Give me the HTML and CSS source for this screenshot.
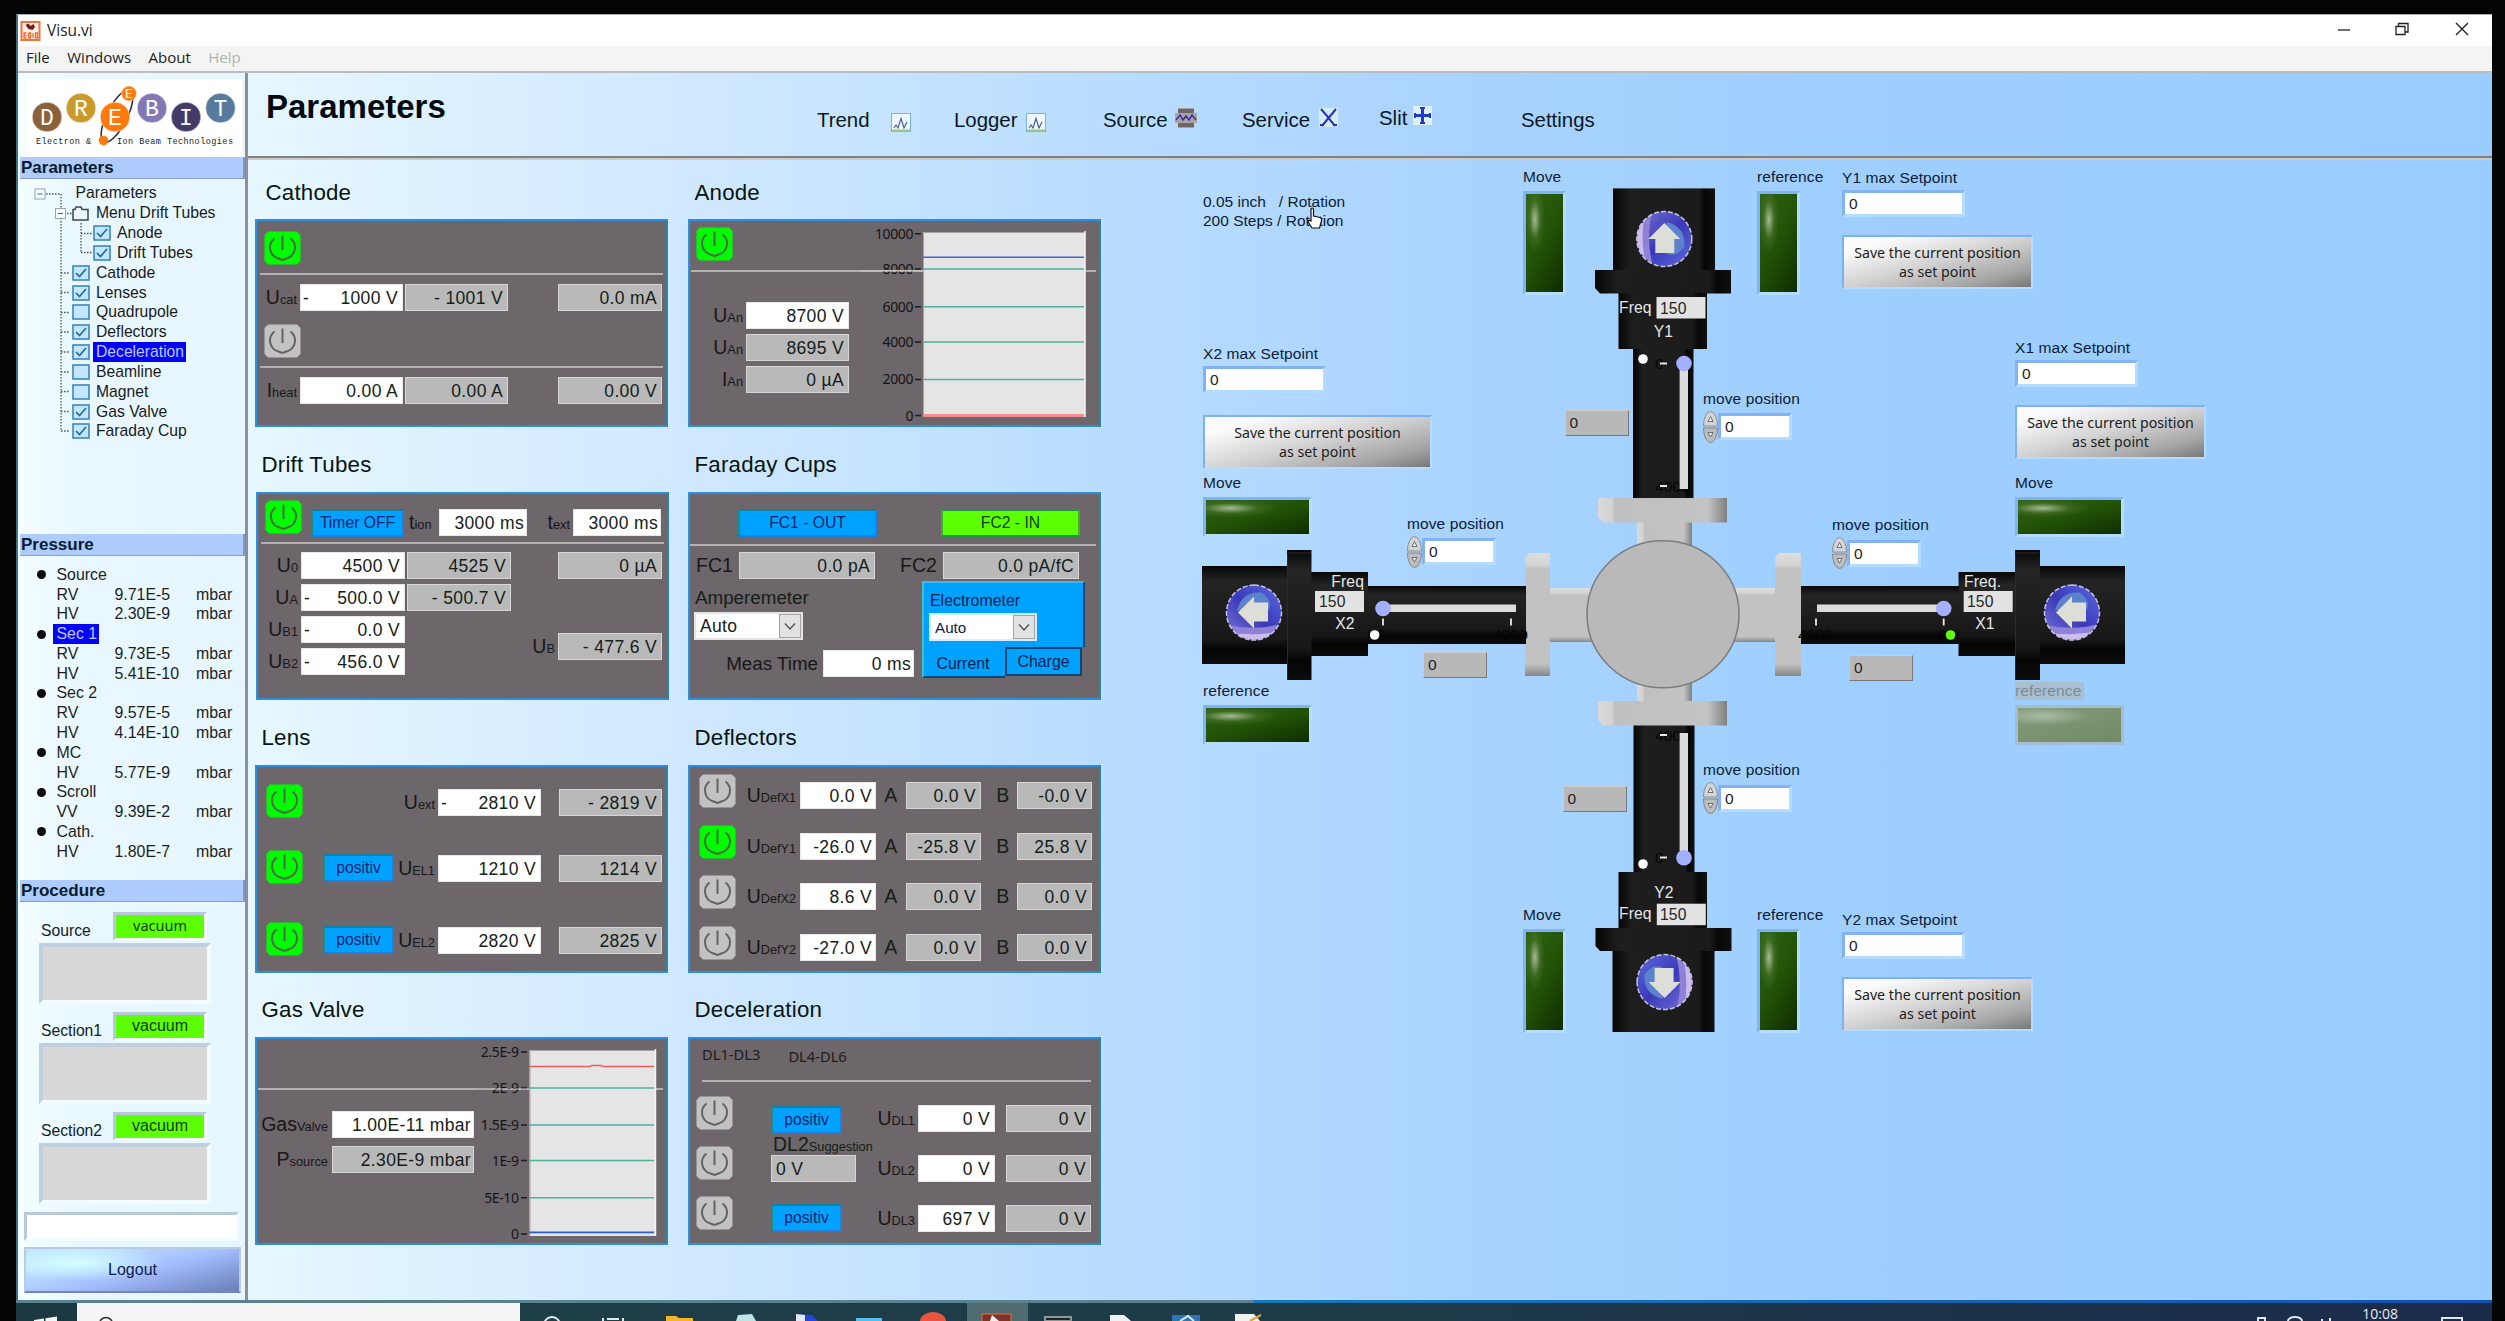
FILE: index.html
```html
<!DOCTYPE html>
<html lang="en">
<head>
<meta charset="utf-8">
<title>Visu.vi</title>
<link rel="stylesheet" href="styles.css">
</head>
<body>
<svg class="defs" width="0" height="0" aria-hidden="true">
  <defs>
    <symbol id="power" viewBox="0 0 37 34">
      <path d="M4 0.500H33L36.500 4V30L33 33.500H4L0.500 30V4Z" fill="currentColor"/>
      <path d="M10.500 7.500A12 11.500 0 0 0 14.500 27.500L18.500 29L22.500 27.500A12 11.500 0 0 0 26.500 7.500" fill="none" stroke="#4d6a45" stroke-width="2"/>
      <path d="M18.500 4.500V19" stroke="#4d6a45" stroke-width="2"/>
    </symbol>
    <symbol id="power-off" viewBox="0 0 37 34">
      <path d="M4 0.500H33L36.500 4V30L33 33.500H4L0.500 30V4Z" fill="#c2c2c2"/>
      <path d="M10.500 7.500A12 11.500 0 0 0 14.500 27.500L18.500 29L22.500 27.500A12 11.500 0 0 0 26.500 7.500" fill="none" stroke="#666163" stroke-width="2"/>
      <path d="M18.500 4.500V19" stroke="#666163" stroke-width="2"/>
    </symbol>
    <symbol id="check" viewBox="0 0 18 16">
      <rect x="1" y="1" width="16" height="14" fill="#c3e6ff" stroke="#3580b5" stroke-width="1.500"/>
      <path d="M4 8L7.500 11.500L14 4" fill="none" stroke="#1e6aa8" stroke-width="1.700"/>
    </symbol>
    <symbol id="uncheck" viewBox="0 0 18 16">
      <rect x="1" y="1" width="16" height="14" fill="#c3e6ff" stroke="#3580b5" stroke-width="1.500"/>
    </symbol>
    <symbol id="graph" viewBox="0 0 20 19">
      <rect x="0.500" y="0.500" width="19" height="18" fill="#eef8fc" stroke="#72b4ec"/>
      <path d="M1 17.500H19" stroke="#9cc97e" stroke-width="2"/>
      <path d="M3 15L5 12L7 15L10 5.500L13 15L16 9" fill="none" stroke="#4a5e92" stroke-width="1.200"/>
    </symbol>
    <symbol id="spin" viewBox="0 0 15 32">
      <path d="M0.500 15A7 14.500 0 0 1 14.500 15Z" fill="#d4d4d4" stroke="#8e8e8e"/>
      <path d="M0.500 17A7 14.500 0 0 0 14.500 17Z" fill="#bdbdbd" stroke="#858585"/>
      <path d="M5 10.500L7.500 5.500L10 10.500Z" fill="#eee" stroke="#555" stroke-width="0.800"/>
      <path d="M5 21.500L7.500 26L10 21.500Z" fill="#eee" stroke="#555" stroke-width="0.800"/>
    </symbol>
    <linearGradient id="ballg" x1="0" x2="1" y1="0" y2="1">
      <stop offset="0" stop-color="#7a74d8"/><stop offset="0.500" stop-color="#3a3ab8"/><stop offset="1" stop-color="#5c6ae0"/>
    </linearGradient>
    <clipPath id="ballclip"><circle r="27"/></clipPath>
    <g id="ball">
      <circle r="27.500" fill="url(#ballg)"/>
      <g clip-path="url(#ballclip)">
        <path d="M-28 -28H-12Q-19 0 -11 28H-28Z" fill="#8f80d8"/>
        <path d="M-28 -28H-19Q-25 0 -18 28H-28Z" fill="#cdbcee"/>
        <path d="M2 -17Q22 -12 20 8Q10 20 2 14Z" fill="#5d82cc"/>
      </g>
      <circle r="27.500" fill="none" stroke="#c4c4e2" stroke-width="1.500" stroke-dasharray="5 2"/>
      <path d="M0 -16L16 0H10V14H-9V0H-16Z" fill="#deded9"/>
    </g>
    <linearGradient id="bx" x1="0" x2="1"><stop offset="0" stop-color="#050505"/><stop offset="0.170" stop-color="#1e1e1e"/><stop offset="0.840" stop-color="#1b1b1b"/><stop offset="0.900" stop-color="#070707"/><stop offset="1" stop-color="#101010"/></linearGradient>
    <linearGradient id="by" x1="0" x2="0" y1="0" y2="1"><stop offset="0" stop-color="#060606"/><stop offset="0.150" stop-color="#242424"/><stop offset="0.750" stop-color="#181818"/><stop offset="0.850" stop-color="#050505"/><stop offset="1" stop-color="#0c0c0c"/></linearGradient>
    <linearGradient id="gx" x1="0" x2="1"><stop offset="0" stop-color="#d9d9d9"/><stop offset="0.110" stop-color="#d2d2d2"/><stop offset="0.130" stop-color="#c0c0c0"/><stop offset="0.850" stop-color="#c3c3c3"/><stop offset="1" stop-color="#7f7f7f"/></linearGradient>
    <linearGradient id="gy" x1="0" x2="0" y1="0" y2="1"><stop offset="0" stop-color="#dedede"/><stop offset="0.100" stop-color="#d2d2d2"/><stop offset="0.130" stop-color="#c2c2c2"/><stop offset="0.900" stop-color="#c2c2c2"/><stop offset="1" stop-color="#868686"/></linearGradient>
  </defs>
</svg>

<div class="screen">
  <div class="window">
    <header class="titlebar">
      <svg class="app-icon" viewBox="0 0 20 20"><rect x="1" y="1" width="18" height="18" fill="#fff0e4" stroke="#ee7440" stroke-width="2"/><path d="M5 4L8 2.500L10 5L13 3L14.500 6L12 9L8 8Z" fill="#7a1620"/><path d="M3 12H6M3 14.500H6M3 17H6M3.500 12V17M8 12V17M8 12H10V17H8M12.500 12V17M15 12H17V17H15Z" stroke="#ee6a30" stroke-width="1.300" fill="none"/></svg>
      <span>Visu.vi</span>
      <svg class="win-buttons" viewBox="0 0 140 20"><path d="M3 11H15" stroke="#222" stroke-width="1.300"/><path d="M61 7.500H70V15.500H61ZM63.500 7V4.500H73V13H70.500" fill="none" stroke="#222" stroke-width="1.300"/><path d="M121 4L133 16M133 4L121 16" stroke="#222" stroke-width="1.400"/></svg>
    </header>
    <nav class="menubar"><span>File</span><span>Windows</span><span>About</span><span class="off">Help</span></nav>

    <div class="body">
      <aside class="sidebar">
        <svg class="logo" viewBox="25 79 218 78">
          <ellipse cx="117" cy="116" rx="29" ry="10" fill="none" stroke="#26263a" stroke-width="1.500" transform="rotate(-63 117 116)"/>
          <g stroke="#fff" stroke-width="0.500">
            <circle cx="47" cy="117" r="14.800" fill="#8a6138"/><circle cx="81" cy="108" r="14.800" fill="#c9992c"/><circle cx="115" cy="117" r="14.800" fill="#ff7a0c"/><circle cx="152" cy="108" r="14.800" fill="#8378b4"/><circle cx="186" cy="117" r="14.800" fill="#443c66"/><circle cx="220.500" cy="108" r="14.800" fill="#587a9c"/><circle cx="129" cy="93.500" r="7.500" fill="#ff7a0c"/>
          </g>
          <circle cx="103.500" cy="140.500" r="4.800" fill="#ff7a0c"/>
          <g class="logo-letters" text-anchor="middle"><text x="47" y="124.500">D</text><text x="81" y="115.500">R</text><text x="115" y="124.500">E</text><text x="152" y="115.500">B</text><text x="186" y="124.500">I</text><text x="220.500" y="115.500">T</text></g>
          <text class="logo-e" x="129" y="98" text-anchor="middle">E</text>
          <text class="logo-sub" x="36" y="144" textLength="55">Electron &amp;</text>
          <text class="logo-sub" x="117" y="144" textLength="116">Ion Beam Technologies</text>
        </svg>
        <h2 class="side-title">Parameters</h2>
        <div class="tree">
          <svg class="tree-lines" viewBox="18 179 227 355"><g fill="none" stroke="#4a565c" stroke-width="1.300" stroke-dasharray="1.500 1.500"><path d="M46 194H61V431M81 223V252M61 213.500H72M81 233.500H92M81 252.500H92M61 273H70M61 292.500H70M61 312.500H70M61 332H70M61 352H70M61 372H70M61 391.500H70M61 411.500H70M61 431H70"/></g><g fill="#f4fbff" stroke="#9aa4aa"><rect x="35" y="189" width="10" height="10"/><rect x="55.500" y="208.500" width="10" height="10"/></g><path d="M37.500 194H42.500M58 213.500H63" stroke="#47608a"/></svg>
          <ul>
            <li class="l0">Parameters</li>
            <li class="l1"><svg class="box" viewBox="0 0 18 16"><path d="M1 4.500H3L4 2H9L10 4.500H16V15H1Z" fill="#eef8fc" stroke="#3c474d" stroke-width="1.500"/></svg>Menu Drift Tubes</li>
            <li class="l2"><svg class="box"><use href="#check"/></svg>Anode</li>
            <li class="l2"><svg class="box"><use href="#check"/></svg>Drift Tubes</li>
            <li class="l1"><svg class="box"><use href="#check"/></svg>Cathode</li>
            <li class="l1"><svg class="box"><use href="#check"/></svg>Lenses</li>
            <li class="l1"><svg class="box"><use href="#uncheck"/></svg>Quadrupole</li>
            <li class="l1"><svg class="box"><use href="#check"/></svg>Deflectors</li>
            <li class="l1"><svg class="box"><use href="#check"/></svg><span class="selected">Deceleration</span></li>
            <li class="l1"><svg class="box"><use href="#uncheck"/></svg>Beamline</li>
            <li class="l1"><svg class="box"><use href="#uncheck"/></svg>Magnet</li>
            <li class="l1"><svg class="box"><use href="#check"/></svg>Gas Valve</li>
            <li class="l1"><svg class="box"><use href="#check"/></svg>Faraday Cup</li>
          </ul>
        </div>
        <h2 class="side-title">Pressure</h2>
        <div class="pressure">
          <div class="head"><i></i><span>Source</span></div>
          <div><span>RV</span><span>9.71E-5</span><span>mbar</span></div>
          <div><span>HV</span><span>2.30E-9</span><span>mbar</span></div>
          <div class="head"><i></i><span class="selected">Sec 1</span></div>
          <div><span>RV</span><span>9.73E-5</span><span>mbar</span></div>
          <div><span>HV</span><span>5.41E-10</span><span>mbar</span></div>
          <div class="head"><i></i><span>Sec 2</span></div>
          <div><span>RV</span><span>9.57E-5</span><span>mbar</span></div>
          <div><span>HV</span><span>4.14E-10</span><span>mbar</span></div>
          <div class="head"><i></i><span>MC</span></div>
          <div><span>HV</span><span>5.77E-9</span><span>mbar</span></div>
          <div class="head"><i></i><span>Scroll</span></div>
          <div><span>VV</span><span>9.39E-2</span><span>mbar</span></div>
          <div class="head"><i></i><span>Cath.</span></div>
          <div><span>HV</span><span>1.80E-7</span><span>mbar</span></div>
        </div>
        <h2 class="side-title">Procedure</h2>
        <div class="procedure">
          <div class="proc"><div class="proc-top"><span>Source</span><b class="small">vacuum</b></div><div class="proc-box"></div></div>
          <div class="proc"><div class="proc-top"><span>Section1</span><b>vacuum</b></div><div class="proc-box"></div></div>
          <div class="proc"><div class="proc-top"><span>Section2</span><b>vacuum</b></div><div class="proc-box"></div></div>
          <div class="user-field"></div>
          <button class="logout">Logout</button>
        </div>
      </aside>

      <main class="main">
        <div class="topnav">
          <h1>Parameters</h1>
          <div class="tabs">
            <span class="tab t-trend">Trend <svg width="20" height="19"><use href="#graph"/></svg></span>
            <span class="tab t-logger">Logger <svg width="20" height="19"><use href="#graph"/></svg></span>
            <span class="tab t-source">Source <svg width="22" height="20" viewBox="0 0 22 20"><path d="M3 0H19V5H22V15H19V20H3V15H0V5H3Z" fill="#a9a4a0"/><path d="M3 1H19V5H3ZM3 15H19V19H3Z" fill="#6d6664"/><path d="M1 12L5 7L8 12L11 8L14 12L17 7L21 12" fill="none" stroke="#3a2aa8" stroke-width="1.500"/></svg></span>
            <span class="tab t-service">Service <svg width="19" height="19" viewBox="0 0 19 19"><rect width="19" height="19" fill="#d4ecf4"/><path d="M2 1L8 8L9.500 10L16 18M17 1L9.500 10L3 18M1 17H5M14 17H18" fill="none" stroke="#2530c4" stroke-width="2"/></svg></span>
            <span class="tab t-slit">Slit <svg width="19" height="19" viewBox="0 0 19 19"><rect width="19" height="19" fill="#def2f6"/><path d="M9.500 1V18M1 9.500H18" stroke="#1c3cc8" stroke-width="3"/><path d="M7 2H12M7 17H12M2 7V12M17 7V12" stroke="#1c3cc8" stroke-width="2"/></svg></span>
            <span class="tab t-settings">Settings</span>
          </div>
        </div>

        <div class="workspace">
          <div class="params">
            <section class="first"><h3 class="in4">Cathode</h3>
              <div class="panel cathode">
                <svg class="power"><use href="#power"/></svg>
                <div class="rule"></div>
                <div class="row"><span class="lab">U<small>cat</small></span><span class="set"><em>-</em>1000 V</span><span class="get">- 1001 V</span><span class="get end">0.0 mA</span></div>
                <svg class="power second"><use href="#power-off"/></svg>
                <div class="rule"></div>
                <div class="row"><span class="lab">I<small>heat</small></span><span class="set">0.00 A</span><span class="get">0.00 A</span><span class="get end">0.00 V</span></div>
              </div>
            </section>
            <section class="first"><h3>Anode</h3>
              <div class="panel anode">
                <div class="rule"></div>
                <div class="stack">
                  <svg class="power"><use href="#power"/></svg>
                  <div class="row"><span class="lab">U<small>An</small></span><span class="set">8700 V</span></div>
                  <div class="row"><span class="lab">U<small>An</small></span><span class="get">8695 V</span></div>
                  <div class="row"><span class="lab">I<small>An</small></span><span class="get">0 µA</span></div>
                </div>
                <svg class="chart" viewBox="860 221 239 204">
                  <rect x="923" y="232" width="162" height="185" fill="#e5e5e5"/><path d="M923.500 417V232.500H1085" fill="none" stroke="#a8a4a4"/><path d="M1085 231V417" stroke="#f4f4f4" stroke-width="1.500"/>
                  <path d="M923 269H1084M923 306.700H1084M923 342H1084M923 379.400H1084" stroke="#4fb3a4" stroke-width="1.500"/>
                  <path d="M923 257.300H1084" stroke="#3f66e0" stroke-width="1.500"/><path d="M923 415.500H1084" stroke="#f28d8d" stroke-width="3"/>
                  <path d="M915 233.700H921M915 269H921M915 306.700H921M915 342H921M915 379.400H921M915 415.500H921" stroke="#1d1d1d" stroke-width="1.500"/>
                  <g text-anchor="end"><text x="913" y="238.500">10000</text><text x="913" y="274">8000</text><text x="913" y="311.500">6000</text><text x="913" y="347">4000</text><text x="913" y="384">2000</text><text x="913" y="420.500">0</text></g>
                  <path d="M860 270.700H923" stroke="#c4c0c0" stroke-width="1.600"/>
                </svg>
              </div>
            </section>

            <section><h3>Drift Tubes</h3>
              <div class="panel drift">
                <div class="top">
                  <svg class="power"><use href="#power"/></svg><span class="btn timer">Timer OFF</span>
                  <span class="lab ion">t<small>ion</small></span><span class="set">3000 ms</span>
                  <span class="lab ext">t<small>ext</small></span><span class="set">3000 ms</span>
                </div>
                <div class="rule"></div>
                <div class="cols">
                  <div class="left">
                    <div class="row"><span class="lab">U<small>0</small></span><span class="set">4500 V</span><span class="get">4525 V</span></div>
                    <div class="row"><span class="lab">U<small>A</small></span><span class="set"><em>-</em>500.0 V</span><span class="get">- 500.7 V</span></div>
                    <div class="row"><span class="lab">U<small>B1</small></span><span class="set"><em>-</em>0.0 V</span></div>
                    <div class="row"><span class="lab">U<small>B2</small></span><span class="set"><em>-</em>456.0 V</span></div>
                  </div>
                  <div class="right">
                    <div class="row"><span class="get">0 µA</span></div>
                    <div class="row ub"><span class="lab">U<small>B</small></span><span class="get">- 477.6 V</span></div>
                  </div>
                </div>
              </div>
            </section>
            <section><h3>Faraday Cups</h3>
              <div class="panel faraday">
                <div class="top"><span class="btn">FC1 - OUT</span><span class="btn green">FC2 - IN</span></div>
                <div class="rule"></div>
                <div class="row"><span class="lab f1">FC1</span><span class="get">0.0 pA</span><span class="lab f2">FC2</span><span class="get">0.0 pA/fC</span></div>
                <div class="cols">
                  <div class="left">
                    <div class="amp">Amperemeter</div>
                    <div class="select"><span>Auto</span><svg viewBox="0 0 22 24"><rect x="0.500" y="0.500" width="21" height="23" fill="#e2e2e2" stroke="#a4a4a4"/><path d="M6 9.500L11 15L16 9.500" fill="none" stroke="#555" stroke-width="1.500"/></svg></div>
                    <div class="row meas"><span class="lab">Meas Time</span><span class="set">0 ms</span></div>
                  </div>
                  <div class="electro">
                    <div class="electro-body"><span>Electrometer</span>
                      <div class="select"><span>Auto</span><svg viewBox="0 0 22 24"><rect x="0.500" y="0.500" width="21" height="23" fill="#e2e2e2" stroke="#a4a4a4"/><path d="M6 9.500L11 15L16 9.500" fill="none" stroke="#555" stroke-width="1.500"/></svg></div></div>
                    <div class="electro-tabs"><span class="current">Current</span><span class="charge">Charge</span></div>
                  </div>
                </div>
              </div>
            </section>

            <section><h3>Lens</h3>
              <div class="panel lens">
                <div class="line"><svg class="power"><use href="#power"/></svg><span class="lab">U<small>ext</small></span><span class="set"><em>-</em>2810 V</span><span class="get end">- 2819 V</span></div>
                <div class="line"><svg class="power"><use href="#power"/></svg><span class="btn pos">positiv</span><span class="lab">U<small>EL1</small></span><span class="set">1210 V</span><span class="get end">1214 V</span></div>
                <div class="line"><svg class="power"><use href="#power"/></svg><span class="btn pos">positiv</span><span class="lab">U<small>EL2</small></span><span class="set">2820 V</span><span class="get end">2825 V</span></div>
              </div>
            </section>
            <section><h3>Deflectors</h3>
              <div class="panel defl">
                <div class="line"><svg class="power"><use href="#power-off"/></svg><span class="lab">U<small>DefX1</small></span><span class="set">0.0 V</span><span class="a">A</span><span class="get">0.0 V</span><span class="b">B</span><span class="get">-0.0 V</span></div>
                <div class="line"><svg class="power"><use href="#power"/></svg><span class="lab">U<small>DefY1</small></span><span class="set">-26.0 V</span><span class="a">A</span><span class="get">-25.8 V</span><span class="b">B</span><span class="get">25.8 V</span></div>
                <div class="line"><svg class="power"><use href="#power-off"/></svg><span class="lab">U<small>DefX2</small></span><span class="set">8.6 V</span><span class="a">A</span><span class="get">0.0 V</span><span class="b">B</span><span class="get">0.0 V</span></div>
                <div class="line"><svg class="power"><use href="#power-off"/></svg><span class="lab">U<small>DefY2</small></span><span class="set">-27.0 V</span><span class="a">A</span><span class="get">0.0 V</span><span class="b">B</span><span class="get">0.0 V</span></div>
              </div>
            </section>

            <section class="last"><h3>Gas Valve</h3>
              <div class="panel gas">
                <div class="rule"></div>
                <div class="stack">
                  <div class="row"><span class="lab">Gas<small>Valve</small></span><span class="set">1.00E-11 mbar</span></div>
                  <div class="row"><span class="lab">P<small>source</small></span><span class="get">2.30E-9 mbar</span></div>
                </div>
                <svg class="chart" viewBox="476 1038 190 204">
                  <rect x="529.500" y="1049" width="126" height="186" fill="#e5e5e5"/><path d="M530 1235V1049.500H655" fill="none" stroke="#a8a4a4"/><path d="M655.500 1048V1235" stroke="#f4f4f4" stroke-width="1.500"/>
                  <path d="M529 1087H654M529 1124H654M529 1159.600H654M529 1196.800H654" stroke="#4fb3a4" stroke-width="1.500"/>
                  <path d="M529 1065.400H590L592 1064.400H601L603 1065.400H654" fill="none" stroke="#f05c5c" stroke-width="1.500"/><path d="M529 1231.400H654" stroke="#2a5ed0" stroke-width="1.800"/>
                  <path d="M521 1051H527M521 1087H527M521 1124H527M521 1159.600H527M521 1196.800H527M521 1233H527" stroke="#1d1d1d" stroke-width="1.500"/>
                  <g text-anchor="end"><text x="518.500" y="1056">2.5E-9</text><text x="518.500" y="1092">2E-9</text><text x="518.500" y="1129">1.5E-9</text><text x="518.500" y="1164.500">1E-9</text><text x="518.500" y="1201.500">5E-10</text><text x="518.500" y="1238">0</text></g>
                  <path d="M476 1088H529" stroke="#aaa6a6" stroke-width="1.400" opacity="0.700"/>
                </svg>
              </div>
            </section>
            <section class="last"><h3>Deceleration</h3>
              <div class="panel decel">
                <div class="heads"><span>DL1-DL3</span><span class="dl4">DL4-DL6</span></div>
                <div class="rule"></div>
                <div class="cols">
                  <div class="pw"><svg class="power"><use href="#power-off"/></svg><svg class="power"><use href="#power-off"/></svg><svg class="power"><use href="#power-off"/></svg></div>
                  <div class="mid"><span class="btn pos">positiv</span><span class="sug">DL2<small>Suggestion</small></span><span class="get">0 V</span><span class="btn pos low">positiv</span></div>
                  <div class="rows">
                    <div class="row"><span class="lab">U<small>DL1</small></span><span class="set">0 V</span><span class="get">0 V</span></div>
                    <div class="row"><span class="lab">U<small>DL2</small></span><span class="set">0 V</span><span class="get">0 V</span></div>
                    <div class="row"><span class="lab">U<small>DL3</small></span><span class="set">697 V</span><span class="get">0 V</span></div>
                  </div>
                </div>
              </div>
            </section>
          </div>

          <div class="stage">
            <svg class="machine" viewBox="1190 161 1302 1139">
              <!-- vacuum cross -->
              <rect x="1637" y="520" width="55" height="183" fill="url(#gx)"/>
              <rect x="1549" y="588" width="228" height="54" fill="url(#gy)"/>
              <path d="M1598 498H1727V522.500H1603L1598 517Z" fill="url(#gx)"/>
              <path d="M1598 701H1727V725.500H1603L1598 720Z" fill="url(#gx)"/>
              <path d="M1529 553H1550V676H1525V558Z" fill="url(#gy)"/>
              <path d="M1779 553H1800L1801 555V676H1775V558Z" fill="url(#gy)"/>
              <ellipse cx="1663" cy="614.300" rx="76" ry="73.500" fill="#b9b9b9" stroke="#7c7c7c" stroke-width="1.500"/>
              <!-- Y1 drive -->
              <rect x="1613" y="188.400" width="102" height="82" fill="url(#bx)"/><path d="M1595 270H1731V293.500H1600L1595 288Z" fill="url(#bx)"/><rect x="1618.500" y="293" width="88.500" height="56" fill="url(#bx)"/><rect x="1633" y="349" width="60.500" height="149" fill="url(#bx)"/>
              <use href="#ball" transform="translate(1664.300 239)"/>
              <g class="scale"><text x="1655" y="369">0</text><text x="1655" y="492">4000</text></g>
              <path d="M1660 363.500H1667M1660 486H1667" stroke="#e8e8e8" stroke-width="1.800"/><circle cx="1643" cy="359" r="4.800" fill="#fff"/><rect x="1679.600" y="363" width="8.400" height="126" fill="#dcdcdc"/><circle cx="1684" cy="363.500" r="7.800" fill="#a3b0ff"/>
              <rect x="1656.500" y="297" width="49" height="21.500" fill="#e2e2e2"/>
              <text class="w" x="1619" y="312.500">Freq</text><text x="1660" y="313.500">150</text><text class="w" x="1663.500" y="336.500" text-anchor="middle">Y1</text>
              <!-- Y2 drive -->
              <rect x="1633.500" y="725.500" width="61" height="147" fill="url(#bx)"/><rect x="1618.500" y="872" width="88.500" height="56" fill="url(#bx)"/><rect x="1612.500" y="950" width="102" height="82" fill="url(#bx)"/><path d="M1595.500 928H1731.500V951H1600L1595.500 946Z" fill="url(#bx)"/>
              <use href="#ball" transform="translate(1664.600 982) rotate(180)"/>
              <g class="scale"><text x="1655" y="741">4000</text><text x="1655" y="863">0</text></g>
              <path d="M1660 735H1667M1660 857.500H1667" stroke="#e8e8e8" stroke-width="1.800"/><circle cx="1643" cy="864" r="4.800" fill="#fff"/><rect x="1679.600" y="733" width="8.400" height="125" fill="#dcdcdc"/><circle cx="1684" cy="857.700" r="7.800" fill="#a3b0ff"/>
              <rect x="1656.800" y="903.700" width="49" height="21.500" fill="#e2e2e2"/>
              <text class="w" x="1619" y="919">Freq</text><text x="1660" y="920">150</text><text class="w" x="1664" y="897.500" text-anchor="middle">Y2</text>
              <!-- X2 drive -->
              <rect x="1202" y="566" width="86" height="98" fill="url(#by)"/><rect x="1311" y="572" width="57" height="84" fill="url(#by)"/><rect x="1368" y="586" width="158" height="58" fill="url(#by)"/><rect x="1287" y="550" width="24.500" height="130" fill="url(#by)"/><path d="M1287.500 553V680M1288 553H1311" stroke="#2c2c2c"/>
              <use href="#ball" transform="translate(1254 612.600) rotate(-90)"/>
              <g class="scale"><text x="1377" y="640">0</text><text x="1493" y="640">4000</text></g>
              <path d="M1383 618.500V625.500M1511 618.500V625.500" stroke="#e8e8e8" stroke-width="1.800"/><circle cx="1374.600" cy="635" r="4.800" fill="#fff"/><rect x="1383" y="604.500" width="133" height="7.500" fill="#dcdcdc"/><circle cx="1383" cy="608.500" r="7.800" fill="#a3b0ff"/>
              <rect x="1315" y="591" width="49" height="21" fill="#e2e2e2"/>
              <text class="w" x="1364" y="587" text-anchor="end">Freq</text><text x="1319" y="607">150</text><text class="w" x="1345" y="629" text-anchor="middle">X2</text>
              <!-- X1 drive -->
              <rect x="2039" y="566" width="86" height="98" fill="url(#by)"/><rect x="1958.500" y="572" width="57" height="84" fill="url(#by)"/><rect x="1801" y="586" width="158" height="58" fill="url(#by)"/><rect x="2015" y="550" width="25" height="130" fill="url(#by)"/><path d="M2015.500 553V680M2016 553H2039" stroke="#2c2c2c"/>
              <use href="#ball" transform="translate(2072 612.600) rotate(-90)"/>
              <g class="scale"><text x="1798" y="640">4000</text><text x="1938" y="640">0</text></g>
              <path d="M1816 618.500V625.500M1943.700 618.500V625.500" stroke="#e8e8e8" stroke-width="1.800"/><circle cx="1950.500" cy="635" r="4.800" fill="#5cff0c"/><rect x="1817" y="604.500" width="127" height="7.500" fill="#dcdcdc"/><circle cx="1943.700" cy="608.500" r="7.800" fill="#a3b0ff"/>
              <rect x="1963.700" y="591" width="49" height="21" fill="#e2e2e2"/>
              <text class="w" x="1964" y="587">Freq.</text><text x="1967" y="607">150</text><text class="w" x="1985" y="629" text-anchor="middle">X1</text>
            </svg>

            <div class="note">0.05 inch &nbsp; / Rotation<br>200 Steps / Rotation</div>
            <svg class="cursor" viewBox="0 0 16 22"><path d="M4 12V2Q5.200 0 6.500 2V9L13 10.500Q15 11 14.500 14L12.500 21H5L1 14.500Q1.500 12.500 4 14Z" fill="#fff" stroke="#111" stroke-width="1.200"/></svg>

            <div class="led-unit v mv-y1"><span>Move</span><i class="led"></i></div>
            <div class="led-unit v rf-y1"><span>reference</span><i class="led"></i></div>
            <div class="led-unit v mv-y2"><span>Move</span><i class="led"></i></div>
            <div class="led-unit v rf-y2"><span>reference</span><i class="led"></i></div>
            <div class="led-unit mv-x2"><span>Move</span><i class="led"></i></div>
            <div class="led-unit rf-x2"><span>reference</span><i class="led"></i></div>
            <div class="led-unit mv-x1"><span>Move</span><i class="led"></i></div>
            <div class="led-unit rf-x1 disabled"><span>reference</span><i class="led"></i></div>

            <div class="setpoint sp-y1"><span>Y1 max Setpoint</span><div class="inp">0</div><button>Save the current position<br>as set point</button></div>
            <div class="setpoint sp-y2"><span>Y2 max Setpoint</span><div class="inp">0</div><button>Save the current position<br>as set point</button></div>
            <div class="setpoint sp-x1"><span>X1 max Setpoint</span><div class="inp">0</div><button>Save the current position<br>as set point</button></div>
            <div class="setpoint sp-x2"><span>X2 max Setpoint</span><div class="inp">0</div><button>Save the current position<br>as set point</button></div>

            <div class="move mp-y1"><span>move position</span><div><svg><use href="#spin"/></svg><div class="inp">0</div></div></div>
            <div class="move mp-y2"><span>move position</span><div><svg><use href="#spin"/></svg><div class="inp">0</div></div></div>
            <div class="move mp-x1"><span>move position</span><div><svg><use href="#spin"/></svg><div class="inp">0</div></div></div>
            <div class="move mp-x2"><span>move position</span><div><svg><use href="#spin"/></svg><div class="inp">0</div></div></div>

            <div class="readout ro-y1">0</div><div class="readout ro-y2">0</div><div class="readout ro-x1">0</div><div class="readout ro-x2">0</div>
          </div>
        </div>
      </main>
    </div>
  </div>
  <footer class="taskbar">
    <div class="start"><svg viewBox="0 0 24 20"><path d="M0 5L10 3.500V20H0ZM11.500 3.300L23 1.500V20H11.500Z" fill="#f2f6f6"/></svg></div>
    <div class="search"><svg viewBox="0 0 16 16"><circle cx="8" cy="8" r="6.500" fill="none" stroke="#333" stroke-width="1.500"/></svg></div>
    <svg class="apps" viewBox="520 1303 780 18">
      <rect x="967" y="1303" width="61" height="18" fill="#4f6c70"/>
      <circle cx="552" cy="1325" r="8" fill="none" stroke="#e4ecec" stroke-width="2"/>
      <path d="M603 1318V1321M607 1319H619M623 1318V1321" stroke="#dfe8e8" stroke-width="2"/>
      <path d="M666 1316H676L679 1318H693V1321H666Z" fill="#f7b52c"/>
      <path d="M738 1315L752 1314L756 1321H736Z" fill="#bfe4e6"/>
      <path d="M796 1314L812 1315L818 1321H797Z" fill="#2545d8"/><path d="M796 1314L805 1315V1321H796Z" fill="#dfe8f4"/>
      <path d="M856 1318H882V1321H856Z" fill="#58bdf0"/>
      <path d="M920 1321A13 9 0 0 1 946 1321Z" fill="#e8553c"/>
      <rect x="982" y="1314" width="29" height="10" fill="#7c342a" stroke="#e56a38"/><path d="M992 1315L999 1321H990Z" fill="#e9eef0"/>
      <rect x="1044" y="1316" width="28" height="6" fill="#8d9698"/><path d="M1046 1319H1070" stroke="#222" stroke-width="2"/>
      <path d="M1110 1315H1124L1131 1321H1110Z" fill="#eef2f2"/>
      <path d="M1172 1315H1200V1321H1172Z" fill="#2f74b4"/><path d="M1180 1321L1188 1316L1194 1321" fill="none" stroke="#d6e8f4" stroke-width="2"/>
      <path d="M1235 1314H1254L1260 1321H1235Z" fill="#eef2ee"/><path d="M1250 1321L1261 1315" stroke="#e3a33c" stroke-width="2"/>
    </svg>
    <div class="tray"><svg viewBox="0 0 100 18"><path d="M6 18V15H13V18M36 18A7 4 0 0 1 50 18M70 18V16M78 18V15" fill="none" stroke="#dfe6ec" stroke-width="2"/></svg><span>10:08</span><svg class="notif" viewBox="0 0 24 18"><path d="M2 18V15H22V18" fill="none" stroke="#dfe6ec" stroke-width="2"/></svg></div>
  </footer>
</div>
</body>
</html>
```
FILE: styles.css
```css
* { box-sizing: border-box; }
body { margin: 0; background: #050505; overflow: hidden; font-family: "Liberation Sans", Arial, sans-serif; font-size: 15.7px; color: #10202c; }
h1, h2, h3, ul { margin: 0; padding: 0; }
svg { display: block; flex: none; }
.defs { position: absolute; }
small { font-size: inherit; }

.screen { width: 2505px; height: 1321px; padding: 14px 13px 0 16px; display: flex; flex-direction: column; background: #050505; }
.window { height: 1286px; flex: none; display: flex; flex-direction: column; border-left: 2px solid #3d6e8a; border-top: 1px solid #aaa; }
.titlebar { height: 31px; background: #fff; display: flex; align-items: center; font-family: "Open Sans", "Noto Sans", sans-serif; font-size: 15.5px; color: #222; flex: none; }
.titlebar span { position: relative; top: -1px; }
.app-icon { width: 21px; height: 20px; margin: 0 6px 0 2px; }
.win-buttons { width: 140px; height: 20px; margin-left: auto; margin-right: 17px; margin-bottom: 3px; }
.menubar { height: 27px; flex: none; background: #f4f4f4; border-bottom: 2px solid #b9bcc0; display: flex; align-items: center; padding-left: 8px; gap: 17.5px; font-family: "Open Sans", "Noto Sans", sans-serif; font-size: 15px; color: #1c1c1c; padding-bottom: 4px; }
.menubar .off { color: #adb5ae; }
.body { flex: 1; display: flex; min-height: 0; }

/* sidebar */
.sidebar { width: 227px; flex: none; background: linear-gradient(90deg, #f4feff, #e9f8ff 25%, #e6f6ff); padding-top: 6px; display: flex; flex-direction: column; }
.logo { width: 218px; height: 78px; margin-left: 7px; background: #fff; }
.logo-letters { font: 23px "Liberation Mono", monospace; fill: #fff; }
.logo-e { font: 13px "Liberation Mono", monospace; fill: #fff; }
.logo-sub { font: 8.5px "Liberation Mono", monospace; fill: #222; }
.side-title { height: 22px; flex: none; margin-left: 2px; padding-left: 1px; line-height: 21px; font-size: 17px; color: #061c30; background: #aeccff; border-bottom: 1.500px solid #8a9ec6; border-right: 2px solid #8298c4; }
.tree { position: relative; height: 355px; padding-top: 4.500px; }
.tree-lines { position: absolute; left: 0; top: 0; width: 227px; height: 355px; }
.tree ul { list-style: none; position: relative; }
.tree li { height: 19.830px; display: flex; align-items: center; color: #1a1a1a; }
.l0 { padding-left: 57.500px; }
.l1 { padding-left: 54px; }
.l2 { padding-left: 75px; }
.box { width: 18px; height: 16px; margin-right: 6px; }
.selected { background: #0404f4; color: #b9c8ff; }
.tree .selected { margin-left: -3px; padding: 0 2px 0 3px; height: 19.500px; line-height: 20px; }
.pressure { height: 324px; flex: none; padding-top: 9px; font-size: 15.9px; color: #1d1d1d; }
.pressure div { height: 19.780px; display: grid; grid-template-columns: 58px 81.500px 1fr; align-items: center; padding-left: 38.500px; }
.pressure .head { display: flex; padding-left: 19px; gap: 10.500px; }
.pressure i { width: 9px; height: 9px; border-radius: 50%; background: #0c0c0c; }
.pressure .selected { margin-left: -4px; padding: 0 2px 0 4px; line-height: 19.500px; }
.procedure { padding-top: 10px; }
.proc { height: 100px; padding-left: 21px; }
.proc-top { height: 31px; display: flex; }
.proc-top span { width: 74px; padding: 9px 0 0 2px; line-height: 20px; }
.proc-top b { width: 94px; height: 29px; border: 3px solid; border-color: #b9c9dd #f2fcff #f2fcff #b9c9dd; background: #5cff04; font-weight: normal; color: #0c3c0c; text-align: center; line-height: 22px; font-size: 16px; }
.proc-top .small { font: 14.5px/20px "Noto Sans", sans-serif; letter-spacing: 0; }
.proc-box { width: 172px; height: 61px; background: #d8d8d8; border: 4px solid; border-color: #bfcfe0 #f2fcff #f2fcff #bfcfe0; }
.user-field { height: 29px; width: 215px; margin: 0 0 6px 6px; background: #fff; border: 3px solid; border-color: #b9c9d9 #f2fcff #f2fcff #b9c9d9; }
.logout { display: block; width: 217px; height: 46px; margin-left: 6px; border: 2px solid #b9cbe0; border-bottom-color: #7487b4; background: radial-gradient(ellipse 90px 18px at 50px 14px, #d2ffff, transparent), linear-gradient(165deg, #bfe2ff 20%, #a3bdff 55%, #6a7eb8); font: 16px "Liberation Sans", Arial, sans-serif; color: #0a1c50; }

/* main */
.main { flex: 1; min-width: 0; border-left: 3px solid #8f8f96; display: flex; flex-direction: column; background: linear-gradient(90deg, #e6f7ff, #d0e8ff 20%, #bbdeff 37%, #abd4ff 52%, #9fcfff 70%, #99ccff); }
.topnav { height: 88px; flex: none; display: flex; background: linear-gradient(#7d8084, #7d8084) 0 83px / 100% 2px no-repeat, linear-gradient(#cfcac2, #cfcac2) 0 85px / 100% 2px no-repeat; }
.topnav h1 { width: 569px; padding-left: 18px; font-size: 33px; line-height: 67px; color: #04090e; }
.tabs { display: flex; align-items: flex-start; font-size: 20.400px; color: #0a1824; }
.tab { display: flex; line-height: 24px; padding-top: 35px; white-space: nowrap; }
.tab svg { margin-left: auto; }
.t-trend { width: 94px; } .t-trend svg, .t-logger svg { margin-top: 5px; }
.t-logger { width: 92px; margin-left: 43px; }
.t-source { width: 94px; margin-left: 57px; }
.t-service { width: 96px; margin-left: 45px; }
.t-slit { width: 53px; margin-left: 41px; padding-top: 33px; }
.t-settings { margin-left: 89px; }
.workspace { flex: 1; display: flex; min-height: 0; }

.params { width: 942px; flex: none; display: grid; grid-template-columns: 413px 413px; column-gap: 20px; padding-left: 7px; align-content: start; }
.params h3 { height: 65px; line-height: 76px; font-weight: normal; font-size: 22.300px; padding-left: 6.500px; letter-spacing: .2px; color: #08140f; }
.params .first h3 { height: 58px; line-height: 64px; }
.params h3.in4 { padding-left: 10.500px; }
.params .last h3 { height: 63.500px; line-height: 74px; }
.panel { height: 208px; border: 2px solid #2a8fe0; border-right-color: #2c84a8; background: #6d666a; font-size: 17.500px; letter-spacing: .35px; color: #142018; }
.power { width: 37px; height: 34px; color: #00fb00; }
.rule { height: 2px; margin: 0 3px; background: #b4b0b0; }
.row, .line { display: flex; height: 27px; }
.lab { font-size: 19.500px; line-height: 27px; text-align: right; padding-right: 3px; color: #181818; white-space: nowrap; letter-spacing: 0; flex: none; }
.lab small, .sug small { font-size: 12.800px; }
.set, .get { width: 103px; height: 27px; flex: none; text-align: right; padding-right: 4px; line-height: 26px; background: #fff; white-space: nowrap; border: 1px solid #e8e8e8; }
.get { background: #b9b9b9; border-color: #d6d6d6; border-width: 1.500px; }
.set em { float: left; font-style: normal; padding-left: 2px; }
.btn { background: #00a2ff; border: 2px solid; border-color: #1480a0 #1f7fe0 #1f7fe0 #149088; color: #0a2470; font-size: 15.700px; letter-spacing: 0; text-align: center; line-height: 24px; flex: none; white-space: nowrap; }
.pos { width: 71px; height: 28px; }
.btn.green { background: #5cff04; color: #0c4010; border-color: #1e9a3c #3cb020; }
.end { margin-left: auto; }

.cathode { padding-top: 10px; }
.cathode .power { margin-left: 7px; }
.cathode .power.second { margin-top: 13px; }
.cathode .rule { margin-top: 8px; }
.cathode .row { margin-top: 9px; padding-right: 4px; }
.cathode .lab { width: 43px; }
.cathode .get { margin-left: 2px; }
.cathode .end { width: 104px; margin-left: auto; }

.anode, .gas { display: grid; grid-template-columns: 170px 1fr; }
.anode .rule, .gas .rule { grid-area: 1 / 1 / 2 / 3; margin-top: 49px; margin-left: 1px; }
.stack { grid-area: 1 / 1; }
.chart { grid-area: 1 / 2; width: 239px; height: 204px; font: 14px "Noto Sans", sans-serif; letter-spacing: -.4px; fill: #151515; }
.anode .power { margin: 6px 0 41px 6px; }
.anode .row { margin-bottom: 5px; }
.anode .lab { width: 56px; }

.drift { margin-left: 1px; width: 413px; padding-top: 6px; }
.drift .top { display: flex; height: 34px; }
.drift .top .power { margin-left: 7px; }
.drift .top > span { margin-top: 9px; }
.drift .top .set { width: 88px; padding-right: 2px; }
.timer { width: 93px; height: 28px; margin-left: 9px; }
.ion { width: 35px; text-align: left; padding-left: 5px; }
.ext { width: 46px; }
.drift .rule { margin-top: 8px; }
.cols { display: flex; }
.drift .cols { margin-top: 8px; }
.drift .left .row { margin-bottom: 5px; }
.drift .left .lab { width: 43px; }
.drift .set, .drift .get { width: 104px; }
.drift .left .get { margin-left: 2px; }
.drift .right { margin-left: auto; margin-right: 5px; }
.drift .right .row { justify-content: flex-end; }
.drift .ub { margin-top: 53.500px; }

.faraday .top { display: flex; gap: 64px; margin: 15px 0 7px 48px; }
.faraday .top .btn { width: 139px; height: 28px; }
.faraday .rule { margin-left: 0; }
.faraday > .row { margin-top: 6px; }
.faraday .get { width: 136px; }
.faraday .f1 { width: 49px; text-align: left; padding-left: 6px; }
.faraday .f2 { width: 68px; text-align: left; padding-left: 25px; }
.faraday .left { width: 232px; }
.amp { font-size: 18.800px; letter-spacing: 0; line-height: 22px; margin: 8px 0 3px 5px; }
.select { width: 109px; height: 28px; margin-left: 4px; background: #fff; border: 2px solid #e4e4e4; display: flex; justify-content: space-between; align-items: center; padding-left: 4px; }
.select svg { width: 22px; height: 24px; }
.faraday .meas { margin-top: 10px; }
.meas .lab { width: 133px; padding-right: 5px; font-size: 18.800px; }
.faraday .meas .set { width: 91px; padding-right: 2px; }
.electro { width: 163px; padding-top: 2px; letter-spacing: 0; color: #08204c; font-size: 15.900px; }
.electro-body { height: 66px; background: #00a2ff; border: 2px solid; border-color: #3cb8f0 #0d4674 #0d4674 #40c0c8; border-bottom-width: 0; padding: 9px 0 0 5px; }
.electro-body > span { display: block; line-height: 18px; margin: 0 0 3px 1px; }
.electro-body .select { margin: 0; width: 108px; border-color: #d8ecff; font-size: 15.200px; }
.electro-tabs { display: flex; text-align: center; }
.current { width: 83px; height: 31px; line-height: 34px; padding-right: 3px; background: #00a2ff; border-bottom: 2px solid #0d4674; border-left: 2px solid #40c0c8; }
.charge { width: 77px; height: 29px; line-height: 26px; background: #00a2ff; border: 2px solid #0d4674; }

.line { height: 34px; }
.line > span { margin-top: 5px; }
.lens { padding-top: 17px; }
.lens .line { padding: 0 4px 0 9px; margin-bottom: 32px; }
.lens .line:nth-child(2) { margin-bottom: 38px; }
.lens .pos { margin-left: 20px; }
.lens .lab { width: 44px; }
.lens .power + .lab { width: 135px; }
.lens .line > .btn { margin-top: 4px; }

.defl { padding-top: 7px; }
.defl .line { padding-left: 9px; margin-bottom: 16.700px; }
.defl .line > span { margin-top: 8px; }
.defl .lab { width: 64px; font-size: 19.500px; padding-right: 4px; }
.defl .lab small { font-size: 12.700px; }
.defl .set { width: 76px; padding-right: 3px; }
.defl .get { width: 75px; }
.a, .b { text-align: center; font-size: 19.500px; line-height: 27px; }
.defl .line .a { width: 30px; padding-right: 0; }
.b { width: 36px; padding-left: 8px; }

.gas { grid-template-columns: 219px 1fr; }
.gas .chart { width: 190px; }
.gas .stack { padding-top: 72px; }
.gas .row { margin-bottom: 8px; }
.gas .lab { width: 75px; padding-right: 4px; }
.gas .set, .gas .get { width: 142px; padding-right: 2px; }

.heads { display: flex; gap: 28px; height: 28px; padding: 5px 0 0 12px; font: 14.700px/20px "Noto Sans", sans-serif; letter-spacing: 0; color: #1c1c1c; }
.dl4 { padding-top: 2px; }
.decel .rule { margin: 13px 8px 0 12px; }
.pw { width: 81px; padding: 14px 0 0 6px; }
.pw .power { margin-bottom: 16px; }
.mid { width: 125px; padding-top: 24px; display: flex; flex-direction: column; }
.mid .get { width: 85px; text-align: left; padding-left: 4px; }
.sug { font-size: 19.500px; height: 21px; line-height: 20px; padding-left: 2px; letter-spacing: 0; white-space: nowrap; }
.mid .low { margin-top: 22px; }
.decel .rows { padding-top: 23px; margin-left: -38px; }
.decel .row { margin-bottom: 23px; }
.decel .lab { width: 60px; }
.decel .set { width: 77px; }
.decel .rows .get { width: 85px; margin-left: 11px; }

/* slit stage: widgets sit around the drawing of the four drives */
.stage { position: relative; flex: 1; min-width: 0; font-size: 15.500px; letter-spacing: .1px; color: #0c1c34; }
.machine { position: absolute; left: 0; top: 0; width: 1302px; height: 1139px; font-size: 15.700px; fill: #262626; }
.machine .w { fill: #e6e6e6; }
.machine .scale { fill: #050505; font-size: 15.500px; }
.note, .cursor, .led-unit, .setpoint, .move, .readout { position: absolute; }
.note { left: 13px; top: 30.500px; line-height: 19px; letter-spacing: 0; }
.cursor { left: 117px; top: 46px; width: 16px; height: 22px; }
.led-unit, .setpoint, .move { line-height: 18px; white-space: nowrap; }
.led-unit > span, .setpoint > span, .move > span { display: block; }
.led { display: block; width: 109px; height: 40px; border: 3px solid; border-color: #7eb4f4 #b4dcff #b4dcff #7eb4f4; margin-top: 5px; background: radial-gradient(ellipse 48px 9px at 24% 24%, #a4bb94, rgba(80,120,50,.5) 55%, transparent), linear-gradient(165deg, #2f6413, #225206 50%, #0f2c02); }
.v .led { width: 43px; height: 104px; background: radial-gradient(ellipse 10px 34px at 24% 26%, #a4bb94, rgba(80,120,50,.5) 55%, transparent), linear-gradient(120deg, #2f6413, #225206 50%, #0f2c02); }
.disabled span { color: #7b8c99; background: #a9bfd0; width: 69px; }
.disabled .led { border-color: #a5bdd2; background: radial-gradient(ellipse 48px 9px at 24% 24%, #a9bca6, transparent), linear-gradient(165deg, #849c79, #728966); }
.mv-y1 { left: 333px; top: 7px; }
.rf-y1 { left: 567px; top: 7px; }
.mv-y2 { left: 333px; top: 745px; }
.rf-y2 { left: 567px; top: 745px; }
.mv-x2 { left: 13px; top: 313px; }
.rf-x2 { left: 13px; top: 521px; }
.mv-x1 { left: 825px; top: 313px; }
.rf-x1 { left: 825px; top: 521px; }
.inp { height: 27px; width: 123px; background: #fff; border: 3px solid; border-color: #82b2f4 #b4dcff #b4dcff #82b2f4; padding-left: 4px; line-height: 22px; color: #222; font-size: 15.500px; }
.setpoint .inp { margin-top: 3px; }
.setpoint button { display: block; margin-top: 18px; width: 191px; height: 54px; padding: 0; border: 2px solid; border-color: #7eb0f4 #b4dcff #b4dcff #7eb0f4; background: linear-gradient(165deg, #fbfbfb 15%, #d2d2d2 50%, #a6a6a6 80%, #777); font: 14.200px/19px "Noto Sans", sans-serif; color: #1c1c1c; }
.sp-y1 { left: 652px; top: 8px; }
.sp-y2 { left: 652px; top: 750px; }
.sp-x1 { left: 825px; top: 178px; }
.sp-x2 { left: 13px; top: 184px; }
.sp-x2 button { width: 229px; margin-top: 22px; }
.move > div { display: flex; align-items: center; margin-top: 3px; }
.move svg { width: 15px; height: 32px; }
.move .inp { width: 74px; }
.mp-y1 { left: 513px; top: 228.500px; }
.mp-y2 { left: 513px; top: 600px; }
.mp-x1 { left: 642px; top: 355px; }
.mp-x2 { left: 217px; top: 353.500px; }
.readout { width: 64px; height: 26px; background: #b8b8b8; border: 1.500px solid; border-color: #ccc #787878 #787878 #ccc; padding-left: 4px; line-height: 23px; color: #222; }
.ro-y1 { left: 374.500px; top: 249px; }
.ro-y2 { left: 372.500px; top: 624.500px; }
.ro-x1 { left: 659px; top: 494px; }
.ro-x2 { left: 233px; top: 491px; }

/* taskbar */
.taskbar { height: 21px; flex: none; display: flex; overflow: hidden; border-top: 3px solid; border-image: linear-gradient(90deg, #5a8290 50%, #1878b8 50%, #1450b0) 3; background: linear-gradient(90deg, #1d3f47, #1e3c48 50%, #1a2b4a); }
.start { width: 61px; background: #1c3840; flex: none; padding: 12px 0 0 18px; }
.start svg { width: 24px; height: 20px; }
.search { width: 443px; flex: none; background: #f5f5f5; padding: 13px 0 0 21px; }
.search svg { width: 16px; height: 16px; }
.apps { width: 780px; height: 18px; }
.tray { flex: 1; display: flex; justify-content: flex-end; padding-right: 28px; font: 14px/16px "Open Sans", sans-serif; color: #e8eef4; }
.tray svg { width: 100px; height: 18px; }
.tray span { margin: 3px 42px 0 10px; }
.tray .notif { width: 24px; }
```
